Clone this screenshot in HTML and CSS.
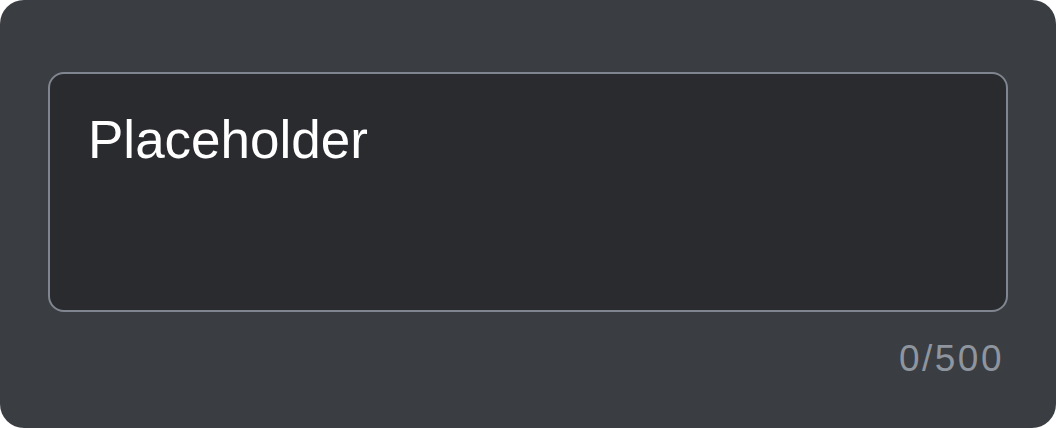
FILE: index.html
```html
<!DOCTYPE html>
<html>
<head>
<meta charset="utf-8">
<link rel="stylesheet" href="styles.css">
</head>
<body>
<div class="card">
  <div class="field">
    <div class="placeholder">Placeholder</div>
  </div>
  <div class="counter">0/500</div>
</div>
</body>
</html>
```
FILE: styles.css
```css
html, body {
  margin: 0;
  padding: 0;
  background: #ffffff;
}
body {
  font-family: "Liberation Sans", Arial, sans-serif;
}
.card {
  box-sizing: border-box;
  width: 1056px;
  height: 428px;
  background: #3a3d42;
  border-radius: 24px;
  padding: 72px 48px 0 48px;
  display: flex;
  flex-direction: column;
}
.field {
  box-sizing: border-box;
  height: 240px;
  background: #2a2b2f;
  border: 2px solid #80868f;
  border-radius: 16px;
  padding: 35px 38px;
}
.placeholder {
  color: #ffffff;
  font-size: 53px;
  line-height: normal;
}
.counter {
  align-self: flex-end;
  margin-top: 26px;
  margin-right: 4px;
  color: #8f959e;
  font-size: 37px;
  letter-spacing: 2.5px;
  line-height: normal;
}
```
